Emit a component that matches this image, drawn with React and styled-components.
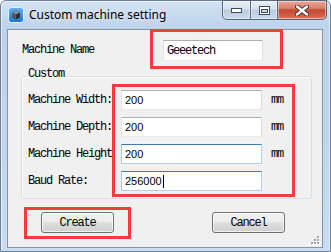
import React from 'react';
import styled, { createGlobalStyle } from 'styled-components';

const GlobalStyle = createGlobalStyle`
  html, body {
    margin: 0;
    padding: 0;
    background: #fff;
  }
  body {
    width: 331px;
    height: 252px;
    overflow: hidden;
  }
`;

const mono = `"Liberation Mono", "DejaVu Sans Mono", monospace`;

const Window = styled.div`
  width: 331px;
  height: 252px;
  box-sizing: border-box;
  display: flex;
  flex-direction: column;
  border: 1px solid #6d7f96;
  border-radius: 6px 6px 0 0;
  background: linear-gradient(180deg, #d3e3f4 0px, #bcd3ec 26px, #c0d6ee 60%, #c9dcf1 100%);
  box-shadow: inset 1px 1px 0 rgba(255, 255, 255, 0.6), inset -1px 0 0 rgba(255, 255, 255, 0.5);
`;

const TitleBar = styled.div`
  height: 28px;
  display: flex;
  align-items: flex-start;
  padding-left: 7px;
`;

const TitleIcon = styled.svg`
  margin-top: 6px;
  width: 16px;
  height: 16px;
`;

const Title = styled.span`
  margin-left: 5px;
  margin-top: 6px;
  font-family: "Noto Sans", "Open Sans", sans-serif;
  font-size: 12px;
  line-height: 16px;
  color: #000;
  text-shadow: 0 0 6px rgba(255, 255, 255, 0.9);
`;

const Controls = styled.div`
  margin-left: auto;
  margin-right: 3px;
  margin-top: -1px;
  display: flex;
`;

const CtrlButton = styled.div`
  width: ${(p) => p.$w}px;
  height: 20px;
  box-sizing: border-box;
  display: flex;
  align-items: center;
  justify-content: center;
  border: 1px solid #55667c;
  border-left-width: ${(p) => (p.$first ? 1 : 0)}px;
  border-radius: ${(p) => p.$radius};
  background: ${(p) =>
    p.$close
      ? 'linear-gradient(180deg, #e9a996 0%, #d8806c 40%, #c24a33 50%, #cf5d44 80%, #e07a5e 100%)'
      : 'linear-gradient(180deg, #e9f0f8 0%, #d5e1ee 45%, #bccde2 50%, #c9d9eb 100%)'};
  box-shadow: inset 0 0 0 1px rgba(255, 255, 255, 0.45);
`;

const Client = styled.div`
  flex: 1;
  position: relative;
  margin: 0 7px 3px 6px;
  border: 1px solid #8393a8;
  background: #f0f0f0;
  display: flex;
  flex-direction: column;
`;

const NameRow = styled.div`
  display: flex;
  align-items: center;
  padding-left: 14px;
`;

const Label = styled.span`
  font-family: ${mono};
  font-size: 12px;
  letter-spacing: -1.2px;
  line-height: 20px;
  height: 20px;
  color: #000;
  white-space: nowrap;
`;

const NameLabel = styled(Label)`
  width: 128px;
`;

const Mark = styled.div`
  box-sizing: border-box;
  border: 3px solid #f33d3d;
`;

const NameMark = styled(Mark)`
  width: 133px;
  height: 40px;
  margin-top: -1px;
  padding: 8px 0 0 10px;
`;

const Input = styled.div`
  box-sizing: border-box;
  width: ${(p) => p.$w}px;
  height: ${(p) => p.$h || 20}px;
  background: #fff;
  border: 1px solid;
  border-color: ${(p) =>
    p.$focus ? '#3d7bad #b5cfe7 #b5cfe7 #a4c9e3' : '#abadb3 #dbdfe6 #e3e9ef #e2e3ea'};
  padding-left: 3px;
  display: flex;
  align-items: center;
  font-family: ${(p) => (p.$mono ? mono : '"Liberation Sans", Arial, sans-serif')};
  font-size: ${(p) => (p.$mono ? 12 : 11)}px;
  letter-spacing: ${(p) => (p.$mono ? '-1.2px' : '0')};
  color: #000;
`;

const Caret = styled.span`
  display: inline-block;
  width: 1px;
  height: 13px;
  margin-left: 1px;
  background: #000;
`;

const Group = styled.fieldset`
  margin: -1px 10px 0 13px;
  padding: 0 0 1px 6px;
  min-width: 0;
  border: 1px solid #d5dfe5;
  border-radius: 3px;
  box-shadow: inset 1px 1px 0 #fff;
`;

const Caption = styled.legend`
  margin-left: -2px;
  padding: 0 2px 4px 2px;
  font-family: ${mono};
  font-size: 12px;
  letter-spacing: -1.2px;
  line-height: 12px;
  color: #000;
`;

const GroupBody = styled.div`
  display: flex;
  align-items: flex-start;
`;

const LabelColumn = styled.div`
  width: 84px;
  padding-top: 6px;
  display: flex;
  flex-direction: column;
  gap: 7px;
`;

const FieldsMark = styled(Mark)`
  width: 183px;
  padding: 3px 3px 3px 6px;
  display: flex;
  flex-direction: column;
  gap: 7px;
`;

const FieldRow = styled.div`
  display: flex;
  align-items: center;
  height: 20px;
`;

const Unit = styled.span`
  margin-left: 9px;
  font-family: ${mono};
  font-size: 12px;
  letter-spacing: -1.2px;
  color: #000;
`;

const ButtonRow = styled.div`
  display: flex;
  align-items: flex-start;
  margin-top: 8px;
  padding-left: 16px;
`;

const ButtonMark = styled(Mark)`
  width: 107px;
  height: 32px;
  padding: 2px 0 0 14px;
`;

const Button = styled.div`
  box-sizing: border-box;
  width: 73px;
  height: 21px;
  margin-top: ${(p) => p.$top || 0}px;
  margin-left: ${(p) => p.$left || 0}px;
  display: flex;
  align-items: center;
  justify-content: center;
  border: 1px solid #707070;
  border-radius: 3px;
  background: linear-gradient(180deg, #f2f2f2 0%, #ebebeb 48%, #dddddd 52%, #cfcfcf 100%);
  box-shadow: inset 0 0 0 1px rgba(255, 255, 255, 0.7);
  font-family: ${mono};
  font-size: 12px;
  letter-spacing: -1.2px;
  color: #000;
`;

const Grip = styled.svg`
  position: absolute;
  right: 2px;
  bottom: 2px;
  width: 9px;
  height: 9px;
`;

function AppIcon() {
  return (
    <TitleIcon viewBox="0 0 16 16">
      <defs>
        <linearGradient id="ig" x1="0" y1="0" x2="0" y2="1">
          <stop offset="0" stopColor="#5cb4f5" />
          <stop offset="1" stopColor="#1478d8" />
        </linearGradient>
      </defs>
      <rect x="0.5" y="0.5" width="15" height="15" rx="3" fill="url(#ig)" stroke="#e8f3ff" />
      <path d="M8 3.5 L12 5.5 L12 10.5 L8 12.5 L4 10.5 L4 5.5 Z" fill="#2a2d33" />
      <path d="M8 3.5 L12 5.5 L8 7.5 L4 5.5 Z" fill="#8a9099" />
      <path d="M4 5.5 L8 7.5 L8 12.5 L4 10.5 Z" fill="#55595f" />
    </TitleIcon>
  );
}

// the height label's colon sits under the input in the original, so it is left out
const fields = [
  { label: 'Machine Width:', value: '200', unit: 'mm' },
  { label: 'Machine Depth:', value: '200', unit: 'mm' },
  { label: 'Machine Height', value: '200', unit: 'mm', focus: true },
  { label: 'Baud Rate:', value: '256000', caret: true, focus: true },
];

export default function App() {
  return (
    <>
      <GlobalStyle />
      <Window>
        <TitleBar>
          <AppIcon />
          <Title>Custom machine setting</Title>
          <Controls>
            <CtrlButton $w={29} $first $radius="0 0 0 5px">
              <svg width="11" height="5" viewBox="0 0 11 5">
                <rect x="0.5" y="0.5" width="10" height="4" fill="#fff" stroke="#3b4a5e" />
              </svg>
            </CtrlButton>
            <CtrlButton $w={27} $radius="0">
              <svg width="11" height="9" viewBox="0 0 11 9">
                <rect x="0.5" y="0.5" width="10" height="8" fill="#fff" stroke="#3b4a5e" />
                <rect x="2.5" y="3.5" width="6" height="3" fill="#c9d7e8" stroke="#3b4a5e" />
              </svg>
            </CtrlButton>
            <CtrlButton $w={49} $close $radius="0 0 5px 0">
              <svg width="14" height="11" viewBox="0 0 14 11">
                <path d="M2 1.5 L12 9.5 M12 1.5 L2 9.5" stroke="#4a2a24" strokeWidth="4.2" strokeLinecap="round" />
                <path d="M2 1.5 L12 9.5 M12 1.5 L2 9.5" stroke="#fff" strokeWidth="2.4" strokeLinecap="round" />
              </svg>
            </CtrlButton>
          </Controls>
        </TitleBar>
        <Client>
          <NameRow>
            <NameLabel>Machine Name</NameLabel>
            <NameMark>
              <Input $w={100} $h={21} $mono>
                Geeetech
              </Input>
            </NameMark>
          </NameRow>
          <Group>
            <Caption>Custom</Caption>
            <GroupBody>
              <LabelColumn>
                {fields.map((f) => (
                  <Label key={f.label}>{f.label}</Label>
                ))}
              </LabelColumn>
              <FieldsMark>
                {fields.map((f) => (
                  <FieldRow key={f.label}>
                    <Input $w={141} $focus={f.focus}>
                      {f.value}
                      {f.caret && <Caret />}
                    </Input>
                    {f.unit && <Unit>{f.unit}</Unit>}
                  </FieldRow>
                ))}
              </FieldsMark>
            </GroupBody>
          </Group>
          <ButtonRow>
            <ButtonMark>
              <Button>Create</Button>
            </ButtonMark>
            <Button $top={5} $left={81}>
              Cancel
            </Button>
          </ButtonRow>
          <Grip viewBox="0 0 9 9">
            {[
              [6, 0],
              [3, 3],
              [6, 3],
              [0, 6],
              [3, 6],
              [6, 6],
            ].map(([x, y]) => (
              <g key={`${x}-${y}`}>
                <rect x={x + 1} y={y + 1} width="2" height="2" fill="#fff" />
                <rect x={x} y={y} width="2" height="2" fill="#a0a6ad" />
              </g>
            ))}
          </Grip>
        </Client>
      </Window>
    </>
  );
}
